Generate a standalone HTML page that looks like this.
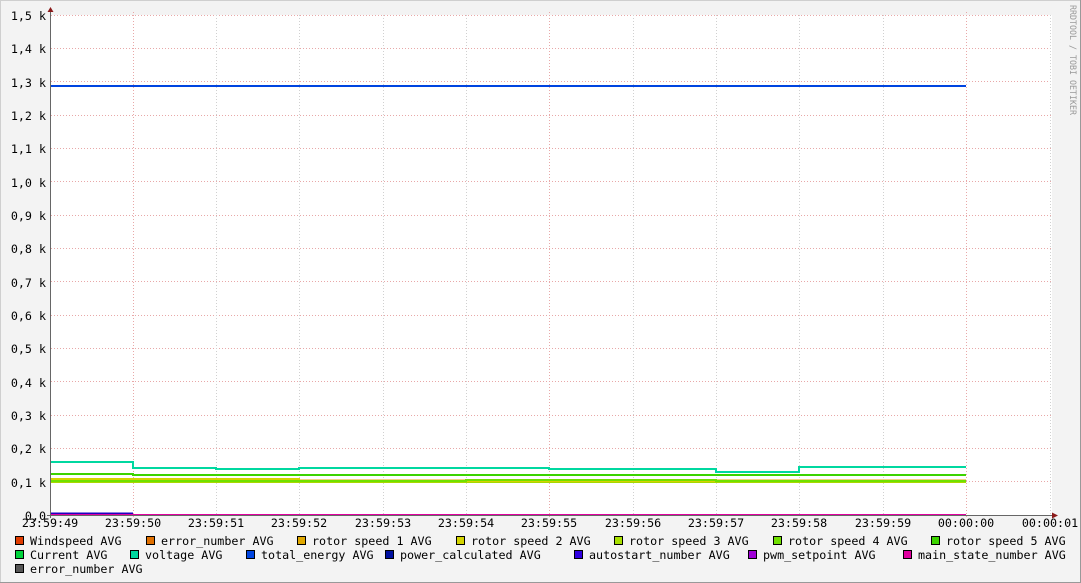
<!DOCTYPE html>
<html><head><meta charset="utf-8"><style>
html,body{margin:0;padding:0;background:#f3f3f3;}
svg{display:block;}
text{font-family:"DejaVu Sans Mono","Liberation Mono",monospace;font-size:11.7px;fill:#000;}
.ax{font-size:10.5px;}
</style></head><body>
<svg width="1081" height="583" viewBox="0 0 1081 583" xmlns="http://www.w3.org/2000/svg">
<rect x="0" y="0" width="1081" height="583" fill="#f3f3f3"/>
<rect x="0.5" y="0.5" width="1080" height="582" fill="none" stroke="#cfcfcf"/>
<line x1="1080.5" y1="0" x2="1080.5" y2="583" stroke="#999"/>
<line x1="0" y1="582.5" x2="1081" y2="582.5" stroke="#999"/>
<rect x="51" y="15" width="1001" height="500" fill="#fff"/>
<g stroke="#e8a8a8" stroke-dasharray="1,2" stroke-width="1">
<line x1="51" x2="1052" y1="15.5" y2="15.5"/><line x1="51" x2="1052" y1="48.5" y2="48.5"/><line x1="51" x2="1052" y1="81.5" y2="81.5"/><line x1="51" x2="1052" y1="115.5" y2="115.5"/><line x1="51" x2="1052" y1="148.5" y2="148.5"/><line x1="51" x2="1052" y1="181.5" y2="181.5"/><line x1="51" x2="1052" y1="215.5" y2="215.5"/><line x1="51" x2="1052" y1="248.5" y2="248.5"/><line x1="51" x2="1052" y1="281.5" y2="281.5"/><line x1="51" x2="1052" y1="315.5" y2="315.5"/><line x1="51" x2="1052" y1="348.5" y2="348.5"/><line x1="51" x2="1052" y1="381.5" y2="381.5"/><line x1="51" x2="1052" y1="415.5" y2="415.5"/><line x1="51" x2="1052" y1="448.5" y2="448.5"/><line x1="51" x2="1052" y1="481.5" y2="481.5"/>
<line x1="133.5" x2="133.5" y1="12" y2="518"/><line x1="549.5" x2="549.5" y1="12" y2="518"/><line x1="966.5" x2="966.5" y1="12" y2="518"/>
</g>
<g stroke="#d0d0d0" stroke-dasharray="1,2">
<line x1="216.5" x2="216.5" y1="15" y2="515"/><line x1="299.5" x2="299.5" y1="15" y2="515"/><line x1="383.5" x2="383.5" y1="15" y2="515"/><line x1="466.5" x2="466.5" y1="15" y2="515"/><line x1="633.5" x2="633.5" y1="15" y2="515"/><line x1="716.5" x2="716.5" y1="15" y2="515"/><line x1="799.5" x2="799.5" y1="15" y2="515"/><line x1="883.5" x2="883.5" y1="15" y2="515"/><line x1="1050.5" x2="1050.5" y1="15" y2="515"/>
</g>
<g fill="none" stroke-width="2">
<path d="M51 86H966" stroke="#0044e0"/>
<path d="M51 480.5H966" stroke="#e0a800"/>
<path d="M51 482H966" stroke="#a8d800"/>
<path d="M51 479H299V481H966" stroke="#d4d400"/>
<path d="M51 481H466V480H716V481H966" stroke="#70e000"/>
<path d="M51 474H133V475H966" stroke="#3cd400"/>
<path d="M51 462H133V468H216V469H299V468H549V469H716V472H799V467H966" stroke="#00d8a0"/>
<path d="M51 513.5H133" stroke="#2000c0"/>
<path d="M51 515H966" stroke="#e000a0"/>
</g>
<line x1="50.5" y1="10" x2="50.5" y2="518" stroke="#666"/>
<line x1="47" y1="515.5" x2="1054" y2="515.5" stroke="#666"/>
<path d="M47.5 12L50.5 7L53.5 12Z" fill="#8b1a1a"/>
<path d="M1052 512.5L1058 515.5L1052 518.5Z" fill="#8b1a1a"/>
<g class="ax" text-anchor="end">
<text x="46" y="20">1,5 k</text><text x="46" y="53">1,4 k</text><text x="46" y="87">1,3 k</text><text x="46" y="120">1,2 k</text><text x="46" y="153">1,1 k</text><text x="46" y="187">1,0 k</text><text x="46" y="220">0,9 k</text><text x="46" y="253">0,8 k</text><text x="46" y="287">0,7 k</text><text x="46" y="320">0,6 k</text><text x="46" y="353">0,5 k</text><text x="46" y="387">0,4 k</text><text x="46" y="420">0,3 k</text><text x="46" y="453">0,2 k</text><text x="46" y="487">0,1 k</text><text x="46" y="520">0,0</text>
</g>
<g class="ax" text-anchor="middle">
<text x="50" y="527">23:59:49</text><text x="133" y="527">23:59:50</text><text x="216" y="527">23:59:51</text><text x="299" y="527">23:59:52</text><text x="383" y="527">23:59:53</text><text x="466" y="527">23:59:54</text><text x="549" y="527">23:59:55</text><text x="633" y="527">23:59:56</text><text x="716" y="527">23:59:57</text><text x="799" y="527">23:59:58</text><text x="883" y="527">23:59:59</text><text x="966" y="527">00:00:00</text><text x="1050" y="527">00:00:01</text>
</g>
<text transform="translate(1070,5) rotate(90)" textLength="110" lengthAdjust="spacingAndGlyphs" style="font-size:9px;fill:#999">RRDTOOL / TOBI OETIKER</text>
<g stroke="#000" stroke-width="1">
<rect x="15.5" y="536.5" width="8" height="8" fill="#e03c00"/>
<rect x="146.5" y="536.5" width="8" height="8" fill="#e07000"/>
<rect x="297.5" y="536.5" width="8" height="8" fill="#e0a800"/>
<rect x="456.5" y="536.5" width="8" height="8" fill="#d4d400"/>
<rect x="614.5" y="536.5" width="8" height="8" fill="#a8e000"/>
<rect x="773.5" y="536.5" width="8" height="8" fill="#70e000"/>
<rect x="931.5" y="536.5" width="8" height="8" fill="#3cd400"/>
<rect x="15.5" y="550.5" width="8" height="8" fill="#00d43c"/>
<rect x="130.5" y="550.5" width="8" height="8" fill="#00d8a0"/>
<rect x="246.5" y="550.5" width="8" height="8" fill="#0044e0"/>
<rect x="385.5" y="550.5" width="8" height="8" fill="#0010a0"/>
<rect x="574.5" y="550.5" width="8" height="8" fill="#3000e0"/>
<rect x="748.5" y="550.5" width="8" height="8" fill="#a000d8"/>
<rect x="903.5" y="550.5" width="8" height="8" fill="#e000a0"/>
<rect x="15.5" y="564.5" width="8" height="8" fill="#555"/>
</g>
<g>
<text x="30" y="545">Windspeed AVG</text>
<text x="161" y="545">error_number AVG</text>
<text x="312" y="545">rotor speed 1 AVG</text>
<text x="471" y="545">rotor speed 2 AVG</text>
<text x="629" y="545">rotor speed 3 AVG</text>
<text x="788" y="545">rotor speed 4 AVG</text>
<text x="946" y="545">rotor speed 5 AVG</text>
<text x="30" y="559">Current AVG</text>
<text x="145" y="559">voltage AVG</text>
<text x="261" y="559">total_energy AVG</text>
<text x="400" y="559">power_calculated AVG</text>
<text x="589" y="559">autostart_number AVG</text>
<text x="763" y="559">pwm_setpoint AVG</text>
<text x="918" y="559">main_state_number AVG</text>
<text x="30" y="573">error_number AVG</text>
</g>
</svg>
</body></html>
